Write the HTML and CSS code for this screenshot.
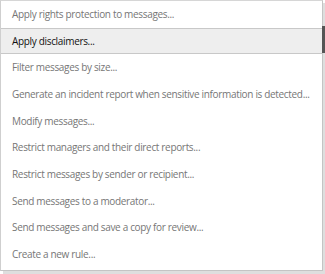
FILE: index.html
```html
<!DOCTYPE html>
<html>
<head>
<meta charset="utf-8">
<link rel="stylesheet" href="styles.css">
</head>
<body>
<div class="frame">
  <div class="menu">
    <ul class="list">
      <li class="item">Apply rights protection to messages...</li>
      <li class="item active">Apply disclaimers...</li>
      <li class="item">Filter messages by size...</li>
      <li class="item">Generate an incident report when sensitive information is detected...</li>
      <li class="item">Modify messages...</li>
      <li class="item">Restrict managers and their direct reports...</li>
      <li class="item">Restrict messages by sender or recipient...</li>
      <li class="item">Send messages to a moderator...</li>
      <li class="item">Send messages and save a copy for review...</li>
      <li class="item">Create a new rule...</li>
    </ul>
    <div class="thumb"></div>
  </div>
</div>
</body>
</html>
```
FILE: styles.css
```css
html, body {
  margin: 0;
  padding: 0;
  background: #ffffff;
}
.frame {
  width: 325px;
  height: 274px;
  overflow: hidden;
}
.menu {
  position: relative;
  box-sizing: border-box;
  width: 323px;
  height: 271px;
  background: #ffffff;
  border-top: 1px solid #d6d6d6;
  border-left: 1px solid #cfcfcf;
  border-right: 1px solid #c4c4c4;
  border-bottom: 1px solid #c4c4c4;
  box-shadow: 3px 3px 0 #dedede;
}
.list {
  list-style: none;
  margin: 0;
  padding: 0;
}
.item {
  box-sizing: border-box;
  height: 26.67px;
  line-height: 26.67px;
  padding-left: 11px;
  font-family: "Open Sans", sans-serif;
  font-size: 10px;
  letter-spacing: -0.33px;
  color: #767676;
  white-space: nowrap;
}
.item.active {
  background: #eeeeee;
  color: #111111;
  box-shadow: inset 0 1px 0 #c8c8c8, inset 0 -1px 0 #c8c8c8;
}
.thumb {
  position: absolute;
  right: -3px;
  top: 25px;
  width: 3px;
  height: 27px;
  background: #555555;
}
```
